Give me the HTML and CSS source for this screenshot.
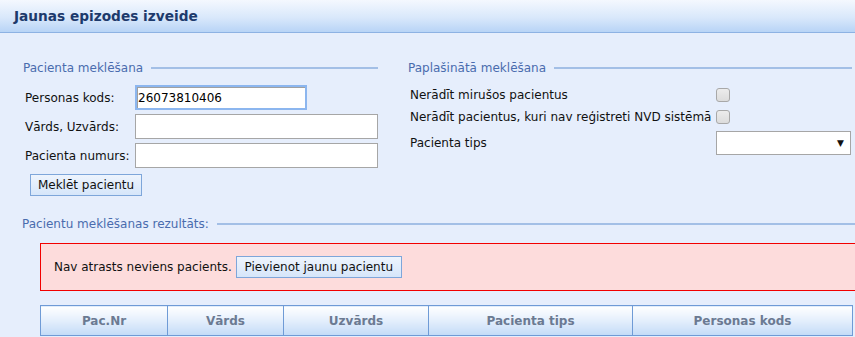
FILE: index.html
```html
<!DOCTYPE html>
<html lang="lv">
<head>
  <meta charset="UTF-8" />
  <title>Jaunas epizodes izveide</title>
  <link rel="stylesheet" href="styles.css">
</head>
<body>
  <div class="panel">
    <div class="panel-title">Jaunas epizodes izveide</div>

    <div class="panel-body">
      <div class="search-area">
        <div class="group group-basic">
          <div class="group-head">
            <span class="group-legend">Pacienta meklēšana</span>
            <span class="group-rule"></span>
          </div>

          <div class="form-row">
            <label class="form-label" for="personCode">Personas kods:</label>
            <input class="text-input text-input--short is-focused" id="personCode" type="text" value="26073810406">
          </div>
          <div class="form-row">
            <label class="form-label" for="fullName">Vārds, Uzvārds:</label>
            <input class="text-input" id="fullName" type="text">
          </div>
          <div class="form-row">
            <label class="form-label" for="patientNr">Pacienta numurs:</label>
            <input class="text-input" id="patientNr" type="text">
          </div>
          <button class="btn btn-search" id="searchBtn">Meklēt pacientu</button>
        </div>

        <div class="group group-extra">
          <div class="group-head">
            <span class="group-legend">Paplašinātā meklēšana</span>
            <span class="group-rule"></span>
          </div>

          <div class="option-row">
            <label class="option-label" for="hideDead">Nerādīt mirušos pacientus</label>
            <input class="check" id="hideDead" type="checkbox">
          </div>
          <div class="option-row">
            <label class="option-label" for="hideNvd">Nerādīt pacientus, kuri nav reģistreti NVD sistēmā</label>
            <input class="check" id="hideNvd" type="checkbox">
          </div>
          <div class="option-row option-row--select">
            <label class="option-label" for="patientType">Pacienta tips</label>
            <div class="select-box" id="patientType">
              <span class="select-value"></span>
              <span class="select-arrow">&#9660;</span>
            </div>
          </div>
        </div>
      </div>

      <div class="group group-results">
        <div class="group-head">
          <span class="group-legend">Pacientu meklēšanas rezultāts:</span>
          <span class="group-rule"></span>
        </div>

        <div class="alert">
          <span class="alert-text">Nav atrasts neviens pacients.</span>
          <button class="btn btn-add" id="addBtn">Pievienot jaunu pacientu</button>
        </div>

        <table class="results-table">
          <thead>
            <tr>
              <th class="col-nr">Pac.Nr</th>
              <th class="col-name">Vārds</th>
              <th class="col-surname">Uzvārds</th>
              <th class="col-type">Pacienta tips</th>
              <th class="col-code">Personas kods</th>
            </tr>
          </thead>
        </table>
      </div>
    </div>
  </div>
</body>
</html>
```

FILE: styles.css
```css
html, body {
  margin: 0;
  padding: 0;
}
body {
  font-family: "DejaVu Sans", Verdana, sans-serif;
  font-size: 12px;
  color: #111;
  background: #e6eefc;
  overflow: hidden;
  height: 337px;
}
.panel {
  width: 855px;
}
.panel-title {
  height: 32px;
  line-height: 32px;
  padding-left: 14px;
  font-size: 13.7px;
  font-weight: 700;
  color: #1d3a6c;
  background: linear-gradient(to bottom, #f4f8fe 0%, #d9e8fb 55%, #b8d4f6 100%);
  border-bottom: 1px solid #8db2e3;
}
.panel-body {
  padding: 27px 0 0 23px;
}
.search-area {
  display: flex;
  gap: 30px;
}
.group-basic {
  width: 355px;
}
.group-extra {
  flex: 1;
  margin-right: 3px;
}
.group-head {
  display: flex;
  align-items: center;
  height: 16px;
  line-height: 16px;
}
.group-legend {
  color: #4a6cae;
  padding-right: 8px;
  white-space: nowrap;
}
.group-rule {
  flex: 1;
  height: 2px;
  background: #a3bfe6;
}
.form-row {
  display: flex;
  align-items: center;
  height: 25px;
  margin-top: 4px;
}
.group-head + .form-row {
  margin-top: 9px;
}
.form-label {
  width: 110px;
  padding-left: 2px;
}
.text-input {
  box-sizing: border-box;
  width: 243px;
  height: 25px;
  border: 1px solid #a6a6a6;
  background: #fff;
  font-family: inherit;
  font-size: 12px;
  padding: 0 3px;
  margin: 0;
}
.text-input--short {
  width: 172px;
}
.text-input.is-focused {
  border: 2px solid #8cb6ef;
  box-shadow: inset 1px 1px 0 #a0a0a0;
  padding: 0 1px;
  outline: none;
}
.btn {
  font-family: inherit;
  font-size: 12px;
  color: #111;
  height: 22px;
  padding: 0 6px;
  border: 1px solid #7ea6da;
  background: linear-gradient(to bottom, #eef4fd 0%, #d6e6fa 100%);
  cursor: pointer;
}
.btn-search {
  margin: 6px 0 0 7px;
  width: 112px;
}
.option-row {
  display: flex;
  align-items: center;
  height: 22px;
}
.group-head + .option-row {
  margin-top: 8px;
}
.option-row--select {
  height: 24px;
  margin-top: 3px;
}
.option-label {
  width: 306px;
  padding-left: 2px;
  white-space: nowrap;
}
.check {
  appearance: none;
  -webkit-appearance: none;
  width: 14px;
  height: 14px;
  margin: 0;
  border: 1px solid #a8a8a8;
  border-radius: 3px;
  background: linear-gradient(to bottom, #ececec, #dcdcdc);
}
.select-box {
  box-sizing: border-box;
  width: 135px;
  height: 24px;
  border: 1px solid #a6a6a6;
  background: #fff;
  display: flex;
  align-items: center;
  justify-content: space-between;
  padding: 0 6px;
}
.select-arrow {
  font-size: 9px;
  color: #111;
}
.group-results {
  margin-top: 20px;
}
.group-results .group-head {
  margin-left: -1px;
}
.alert {
  display: flex;
  align-items: center;
  gap: 4px;
  height: 46px;
  margin: 11px -40px 0 17px;
  padding-left: 13px;
  background: #fddcdc;
  border: 1px solid #f20000;
}
.btn-add {
  width: 166px;
}
.results-table {
  margin: 14px 0 0 17px;
  width: 812px;
  border-collapse: collapse;
  table-layout: fixed;
}
.results-table th {
  height: 29px;
  padding: 0;
  border: 1px solid #6f9bd6;
  background: linear-gradient(to bottom, #ffffff 0%, #e3eefc 50%, #c3dbf7 100%);
  color: #6b7a92;
  font-weight: 700;
  font-size: 12px;
  text-align: center;
}
.col-nr { width: 126px; }
.col-name { width: 115px; }
.col-surname { width: 144px; }
.col-type { width: 203px; }
.col-code { width: 219px; }
```
